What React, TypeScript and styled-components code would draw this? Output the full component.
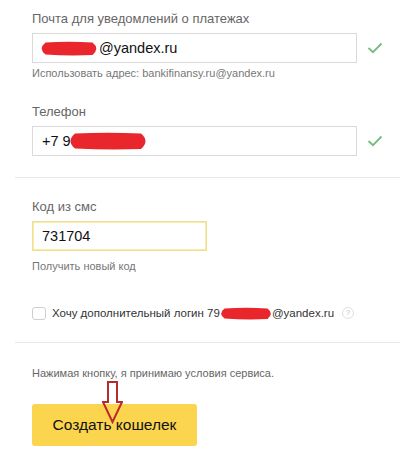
import React from "react";
import styled, { createGlobalStyle } from "styled-components";

const GlobalStyle = createGlobalStyle`
  html, body {
    margin: 0;
    padding: 0;
    background: #ffffff;
  }
  body {
    font-family: "Liberation Sans", Arial, sans-serif;
    color: #000;
  }
`;

const Page = styled.div`
  width: 400px;
  height: 467px;
  overflow: hidden;
  display: flex;
  flex-direction: column;
`;

const Section = styled.div<{ $top: number; $bottom: number }>`
  padding: ${(p) => p.$top}px 0 ${(p) => p.$bottom}px 32px;
  display: flex;
  flex-direction: column;
`;

const Divider = styled.div<{ $top?: number }>`
  margin-left: 15px;
  margin-top: ${(p) => p.$top ?? 0}px;
  height: 1px;
  background: #e8e8e8;
`;

const Label = styled.div<{ $gapTop?: number }>`
  font-size: 13px;
  line-height: 16px;
  color: #666;
  margin-top: ${(p) => p.$gapTop ?? 0}px;
  margin-bottom: 6px;
`;

const FieldRow = styled.div`
  display: flex;
  align-items: center;
  gap: 10px;
`;

const InputBox = styled.div<{ $width: number; $focused?: boolean }>`
  box-sizing: border-box;
  width: ${(p) => p.$width}px;
  height: 30px;
  border: 1px solid ${(p) => (p.$focused ? "#f2e08c" : "#d9d9d9")};
  box-shadow: ${(p) => (p.$focused ? "inset 0 0 0 1px #f7eab0" : "none")};
  padding: 0 9px;
  display: flex;
  align-items: center;
  font-size: 14.5px;
  color: #111;
  white-space: nowrap;
`;

const Hint = styled.div<{ $top: number }>`
  margin-top: ${(p) => p.$top}px;
  font-size: 11px;
  line-height: 14px;
  color: #777;
`;

const CheckRow = styled.label`
  display: flex;
  align-items: center;
  margin-top: 33px;
  font-size: 11.5px;
  line-height: 14px;
  color: #333;
`;

const CheckBox = styled.span`
  box-sizing: border-box;
  width: 14px;
  height: 13px;
  border: 1px solid #cfcfcf;
  border-radius: 3px;
  margin-right: 6px;
  flex: none;
`;

const HelpIcon = styled.span`
  box-sizing: border-box;
  width: 12px;
  height: 12px;
  border: 1px solid #e0e0e0;
  border-radius: 50%;
  margin-left: 8px;
  display: inline-flex;
  align-items: center;
  justify-content: center;
  font-size: 8px;
  color: #c4c4c4;
`;

const Terms = styled.div`
  font-size: 11px;
  line-height: 14px;
  color: #666;
`;

const Button = styled.button`
  position: relative;
  margin-top: 24px;
  width: 165px;
  height: 42px;
  border: none;
  border-radius: 3px;
  background: #fcd54e;
  font-family: "Liberation Sans", Arial, sans-serif;
  font-size: 15.5px;
  color: #111;
  padding: 0;
  cursor: pointer;
`;

const ArrowOverlay = styled.svg`
  position: absolute;
  left: 70px;
  top: -24px;
`;

const Scribble = styled.svg<{ $shift: number; $after: number }>`
  flex: none;
  margin-left: ${(p) => p.$shift}px;
  margin-right: ${(p) => p.$after}px;
`;

const Check = () => (
  <svg width="16" height="12" viewBox="0 0 16 12">
    <path d="M1.5 6 L6 10.2 L14.5 1.5" fill="none" stroke="#79ba7f" strokeWidth="1.8" />
  </svg>
);

const RedScribble = ({
  w,
  h,
  shift,
  after = 0,
}: {
  w: number;
  h: number;
  shift: number;
  after?: number;
}) => (
  <Scribble $shift={shift} $after={after} width={w} height={h} viewBox={`0 0 ${w} ${h}`}>
    <path
      d={`M${h / 2} 1.5 Q${w * 0.5} 0 ${w - h / 2} 1.5 Q${w} ${h / 2} ${w - h / 2} ${h - 1} Q${w * 0.5} ${h} ${h / 2} ${h - 1.5} Q0 ${h / 2} ${h / 2} 1.5 Z`}
      fill="#e8262b"
    />
  </Scribble>
);

export default function App() {
  return (
    <>
      <GlobalStyle />
      <Page>
        <Section $top={11} $bottom={21}>
          <Label>Почта для уведомлений о платежах</Label>
          <FieldRow>
            <InputBox $width={325}>
              <RedScribble w={62} h={15} shift={-4} after={-1} />
              <span>@yandex.ru</span>
            </InputBox>
            <Check />
          </FieldRow>
          <Hint $top={3}>Использовать адрес: bankifinansy.ru@yandex.ru</Hint>
          <Label $gapTop={24}>Телефон</Label>
          <FieldRow>
            <InputBox $width={325}>
              <span>+7 9</span>
              <RedScribble w={84} h={18} shift={-5} />
            </InputBox>
            <Check />
          </FieldRow>
        </Section>
        <Divider />
        <Section $top={21} $bottom={0}>
          <Label>Код из смс</Label>
          <InputBox $width={175} $focused>
            731704
          </InputBox>
          <Hint $top={8}>Получить новый код</Hint>
          <CheckRow>
            <CheckBox />
            <span>Хочу дополнительный логин 79</span>
            <RedScribble w={56} h={13} shift={-2} after={-2} />
            <span>@yandex.ru</span>
            <HelpIcon>?</HelpIcon>
          </CheckRow>
        </Section>
        <Divider $top={22} />
        <Section $top={23} $bottom={0}>
          <Terms>Нажимая кнопку, я принимаю условия сервиса.</Terms>
          <div>
            <Button>
              Создать кошелек
              <ArrowOverlay width="21" height="44" viewBox="0 0 21 44">
                <path
                  d="M6 2 H15 V22 H20 L10.5 42 L1 22 H6 Z"
                  fill="none"
                  stroke="#b92a2f"
                  strokeWidth="2"
                  strokeLinejoin="miter"
                />
              </ArrowOverlay>
            </Button>
          </div>
        </Section>
      </Page>
    </>
  );
}
